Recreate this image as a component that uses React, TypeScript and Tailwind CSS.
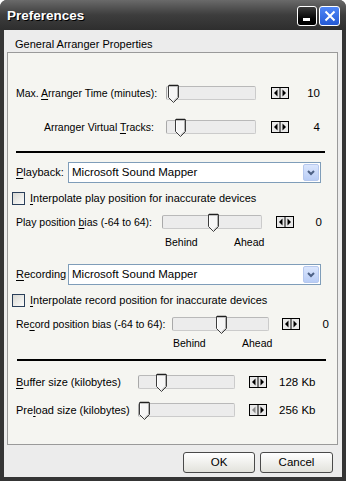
import React from 'react';

const Thumb = () => (
  <svg width="13" height="20" viewBox="0 0 13 20">
    <path d="M1.5 1.5 H11.5 V13.5 L6.5 18.5 L1.5 13.5 Z" fill="#f6f6f6" stroke="#3c3c3c" />
    <path d="M2.5 2.5 V13" stroke="#ffffff" />
    <path d="M10.5 2.5 V13.2 L6.5 17.2" stroke="#b0b0b0" fill="none" />
    <path d="M2 1.5 H11" stroke="#202020" strokeWidth="1.5" />
  </svg>
);

const Spin = ({ dim = false }: { dim?: boolean }) => (
  <svg width="18" height="12" viewBox="0 0 18 12">
    <rect x="0.5" y="0.5" width="17" height="11" fill="#e8e8e8" stroke="#000" />
    <path d="M9 0.5 V11.5" stroke="#000" />
    <path d="M6.5 2.5 V9.5 L3 6 Z" fill={dim ? '#8a8a8a' : '#000'} />
    <path d="M11.5 2.5 V9.5 L15 6 Z" fill="#000" />
  </svg>
);

const Slider = ({ w, thumb }: { w: number; thumb: number }) => (
  <div className="relative h-[14px] border border-[#cbcbcb] border-l-[#a9a9a9] border-t-[#b9b9b9] bg-[#ececec] rounded-[2px]" style={{ width: w }}>
    <div className="absolute top-[-3px]" style={{ left: thumb - 1 }}>
      <Thumb />
    </div>
  </div>
);

const Check = ({ children }: { children: React.ReactNode }) => (
  <div className="flex items-center h-[14px] pl-[4px] gap-[5px] whitespace-nowrap">
    <div className="w-[13px] h-[13px] border border-[#2a3f5a] bg-linear-to-br from-[#d8d8d3] to-[#fcfcfb]" />
    <span>{children}</span>
  </div>
);

const Combo = ({ label }: { label: React.ReactNode }) => (
  <div className="flex items-center h-[21px] pl-[8px]">
    <span className="w-[52px] whitespace-nowrap">{label}</span>
    <div className="w-[253px] h-[21px] border border-[#7f9db9] bg-white flex items-center pl-[3px]">
      <span className="text-[11.5px]">Microsoft Sound Mapper</span>
      <div className="ml-auto mr-[1px] w-[16px] h-[17px] rounded-[2px] border border-[#b6c8ee] bg-linear-to-b from-[#dbe6fd] to-[#b9cdf6] flex items-center justify-center">
        <svg width="8" height="6" viewBox="0 0 8 6">
          <path d="M1 1 L4 4 L7 1" stroke="#4d6185" strokeWidth="2" fill="none" />
        </svg>
      </div>
    </div>
  </div>
);

const Marks = ({ left, gap }: { left: number; gap: number }) => (
  <div className="flex items-center h-[12px] text-[10.5px]" style={{ paddingLeft: left }}>
    <span style={{ width: gap }}>Behind</span>
    <span>Ahead</span>
  </div>
);

const U = ({ children }: { children: React.ReactNode }) => <span className="underline underline-offset-[2px]">{children}</span>;

export default function App() {
  return (
    <div className="w-[346px] h-[481px] flex flex-col bg-[#353535] rounded-t-[7px] font-['Liberation_Sans',Arial,sans-serif] text-[11px] text-black leading-[13px]">
      <div className="h-[30px] flex items-center pl-[7px] pr-[6px] rounded-t-[7px] bg-linear-to-b from-[#6a6a6a] via-[#3d3d3d] to-[#2e2e2e]">
        <span className="text-white font-bold text-[13.5px] [text-shadow:1px_1px_0_#000]">Preferences</span>
        <div className="ml-auto flex gap-[2px] mt-[1px]">
          <div className="w-[20px] h-[20px] rounded-[3px] border border-white bg-linear-to-b from-[#3a3a3a] to-[#000] flex items-end pl-[5px] pb-[4px]">
            <div className="w-[7px] h-[3px] bg-white" />
          </div>
          <div className="w-[21px] h-[20px] rounded-[3px] border border-white bg-linear-to-b from-[#4f86f7] to-[#2459d4] flex items-center justify-center">
            <svg width="12" height="12" viewBox="0 0 12 12">
              <path d="M1.5 1.5 L10.5 10.5 M10.5 1.5 L1.5 10.5" stroke="#fff" strokeWidth="2" />
            </svg>
          </div>
        </div>
      </div>

      <div className="flex-1 mx-[4px] mb-[4px] bg-[#ececec] flex flex-col">
        <div className="h-[22px] pt-[8px] pl-[11px]">General Arranger Properties</div>

        <div className="ml-[3px] mr-[4px] h-[393px] border border-[#9a9a9a] bg-[#f5f5f1] flex flex-col">
          <div className="flex items-center h-[20px] mt-[30px] pl-[8px]">
            <span className="w-[150px] whitespace-nowrap text-[10.5px]">Max. <U>A</U>rranger Time (minutes):</span>
            <Slider w={90} thumb={1} />
            <div className="ml-[15px]"><Spin /></div>
            <span className="w-[31px] text-right text-[11.5px]">10</span>
          </div>
          <div className="flex items-center h-[20px] mt-[14px] pl-[8px]">
            <span className="w-[150px] whitespace-nowrap text-right pr-[12px] text-[10.5px]">Arranger Virtual <U>T</U>racks:</span>
            <Slider w={90} thumb={8} />
            <div className="ml-[15px]"><Spin /></div>
            <span className="w-[31px] text-right text-[11.5px]">4</span>
          </div>

          <div className="ml-[8px] w-[309px] h-[2px] bg-black mt-[14px]" />

          <div className="mt-[9px]">
            <Combo label={<><U>P</U>layback:</>} />
          </div>
          <div className="mt-[8px]">
            <Check><U>I</U>nterpolate play position for inaccurate devices</Check>
          </div>
          <div className="flex items-center h-[20px] mt-[7px] pl-[8px]">
            <span className="w-[146px] whitespace-nowrap text-[10.5px]">Play position <U>b</U>ias (-64 to 64):</span>
            <Slider w={100} thumb={45} />
            <div className="ml-[14px]"><Spin /></div>
            <span className="w-[28px] text-right text-[11.5px]">0</span>
          </div>
          <div className="mt-[4px]">
            <Marks left={157} gap={69} />
          </div>

          <div className="mt-[16px]">
            <Combo label={<><U>R</U>ecording</>} />
          </div>
          <div className="mt-[8px]">
            <Check><U>I</U>nterpolate record position for inaccurate devices</Check>
          </div>
          <div className="flex items-center h-[20px] mt-[7px] pl-[8px]">
            <span className="w-[156px] whitespace-nowrap text-[10.5px]">Re<U>c</U>ord position bias (-64 to 64):</span>
            <Slider w={97} thumb={43} />
            <div className="ml-[13px]"><Spin /></div>
            <span className="w-[29px] text-right text-[11.5px]">0</span>
          </div>
          <div className="mt-[3px]">
            <Marks left={165} gap={69} />
          </div>

          <div className="ml-[9px] w-[309px] h-[2px] bg-black mt-[10px]" />

          <div className="flex items-center h-[20px] mt-[11px] pl-[8px]">
            <span className="w-[122px] whitespace-nowrap"><U>B</U>uffer size (kilobytes)</span>
            <Slider w={97} thumb={17} />
            <div className="ml-[14px]"><Spin /></div>
            <span className="ml-[12px] text-[11.5px]">128 Kb</span>
          </div>
          <div className="flex items-center h-[20px] mt-[8px] pl-[8px]">
            <span className="w-[122px] whitespace-nowrap">Pre<U>l</U>oad size (kilobytes)</span>
            <Slider w={97} thumb={0} />
            <div className="ml-[14px]"><Spin dim /></div>
            <span className="ml-[12px] text-[11.5px]">256 Kb</span>
          </div>
        </div>

        <div className="flex justify-end gap-[5px] mt-[7px] pr-[9px]">
          <button className="w-[72px] h-[21px] rounded-[3px] border border-[#4a4a4a] bg-linear-to-b from-white to-[#e2e2dc] text-[11.5px]">OK</button>
          <button className="w-[73px] h-[21px] rounded-[3px] border border-[#4a4a4a] bg-linear-to-b from-white to-[#e2e2dc] text-[11.5px]">Cancel</button>
        </div>
      </div>
    </div>
  );
}
